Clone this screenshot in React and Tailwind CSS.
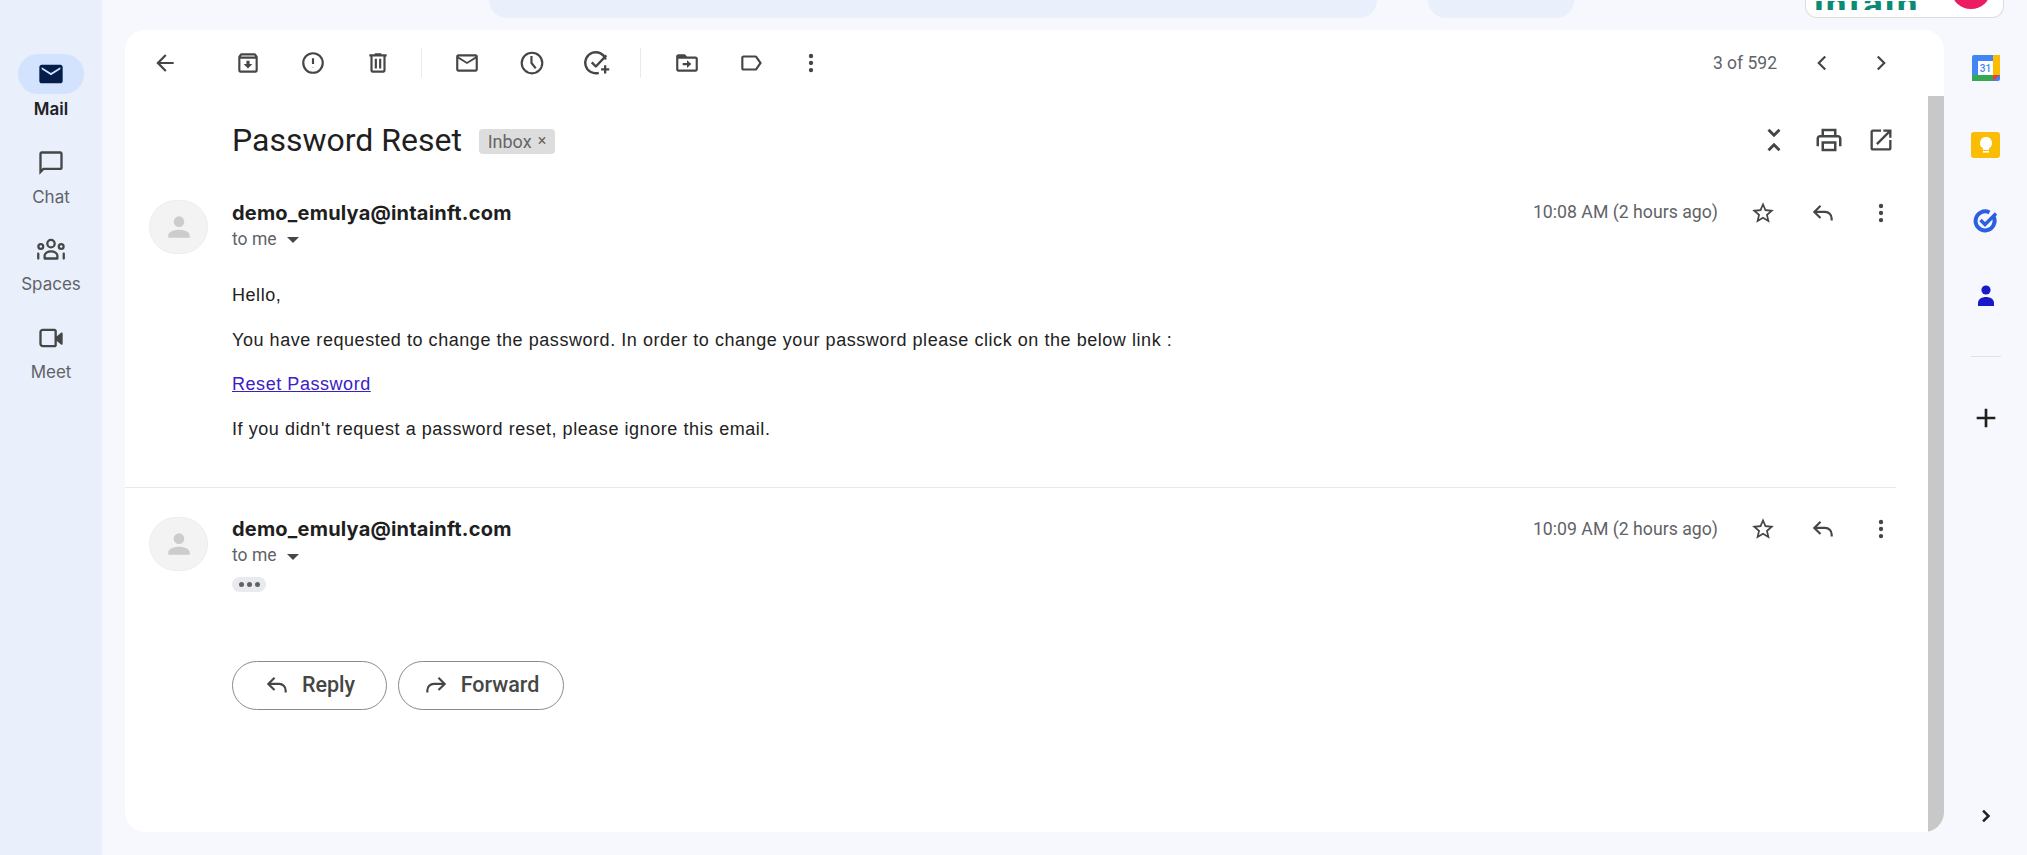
import React from "react";

const ui = "font-['Roboto',sans-serif]";

// Material-style glyph wrapper, filled by default
function Icon({ d, size = 26, className = "text-[#444746]", children }) {
  return (
    <svg width={size} height={size} viewBox="0 0 24 24" fill="currentColor" className={className}>
      {d && <path d={d} />}
      {children}
    </svg>
  );
}

const paths = {
  back: "M20 11H7.83l5.59-5.59L12 4l-8 8 8 8 1.41-1.41L7.83 13H20v-2z",
  archive:
    "M20.54 5.23l-1.39-1.68C18.88 3.21 18.47 3 18 3H6c-.47 0-.88.21-1.16.55L3.46 5.23C3.17 5.57 3 6.02 3 6.5V19c0 1.1.9 2 2 2h14c1.1 0 2-.9 2-2V6.5c0-.48-.17-.93-.46-1.27zM6.24 5h11.52l.81.97H5.44l.8-.97zM5 19V8h14v11H5zm8.45-9h-2.9v3H8l4 4 4-4h-2.55z",
  trash:
    "M15 4V3H9v1H4v2h1v13c0 1.1.9 2 2 2h10c1.1 0 2-.9 2-2V6h1V4h-5zm2 15H7V6h10v13zM9 8h2v9H9zm4 0h2v9h-2z",
  mail: "M22 6c0-1.1-.9-2-2-2H4c-1.1 0-2 .9-2 2v12c0 1.1.9 2 2 2h16c1.1 0 2-.9 2-2V6zm-2 0l-8 5-8-5h16zm0 12H4V8l8 5 8-5v10z",
  move: "M20 6h-8l-2-2H4c-1.11 0-2 .89-2 2v12c0 1.1.9 2 2 2h16c1.1 0 2-.9 2-2V8c0-1.1-.9-2-2-2zm0 12H4V8h16v10zM12 16.5l4-3.5-4-3.5V12H8v2h4z",
  label:
    "M17.63 5.84C17.27 5.33 16.67 5 16 5L5 5.01C3.9 5.01 3 5.9 3 7v10c0 1.1.9 1.99 2 1.99L16 19c.67 0 1.27-.33 1.63-.84L22 12l-4.37-6.16zM16 17H5V7h11l3.55 5L16 17z",
  unfold:
    "M7.41 18.59L8.83 20 12 16.83 15.17 20l1.41-1.41L12 14l-4.59 4.59zm9.18-13.18L15.17 4 12 7.17 8.83 4 7.41 5.41 12 10l4.59-4.59z",
  print:
    "M19 8h-1V3H6v5H5c-1.66 0-3 1.34-3 3v6h4v4h12v-4h4v-6c0-1.66-1.34-3-3-3zM8 5h8v3H8V5zm8 14H8v-4h8v4zm2-2v-4H6v4H4v-6c0-.55.45-1 1-1h14c.55 0 1 .45 1 1v6h-2z",
  open: "M19 19H5V5h7V3H5c-1.11 0-2 .9-2 2v14c0 1.1.89 2 2 2h14c1.1 0 2-.9 2-2v-7h-2v7zM14 3v2h3.59l-9.83 9.83 1.41 1.41L19 6.41V10h2V3h-7z",
  star: "M22 9.24l-7.19-.62L12 2 9.19 8.63 2 9.24l5.46 4.73L5.82 21 12 17.27 18.18 21l-1.63-7.03L22 9.24zM12 15.4l-3.76 2.27 1-4.28-3.32-2.88 4.38-.38L12 6.1l1.71 4.04 4.38.38-3.32 2.88 1 4.28L12 15.4z",
  chat: "M20 2H4c-1.1 0-2 .9-2 2v18l4-4h14c1.1 0 2-.9 2-2V4c0-1.1-.9-2-2-2zm0 14H5.17L4 17.17V4h16v12z",
  person: "M12 12a4 4 0 1 0 0-8 4 4 0 0 0 0 8zm0 2c-2.7 0-8 1.3-8 4v2h16v-2c0-2.7-5.3-4-8-4z",
};

function Stroke({ children, size = 26, width = 2, className = "text-[#444746]" }) {
  return (
    <svg
      width={size}
      height={size}
      viewBox="0 0 24 24"
      fill="none"
      stroke="currentColor"
      strokeWidth={width}
      strokeLinecap="round"
      strokeLinejoin="round"
      className={className}
    >
      {children}
    </svg>
  );
}

const MoreVert = ({ size = 26 }) => (
  <Icon size={size}>
    <circle cx="12" cy="5.5" r="2" />
    <circle cx="12" cy="12" r="2" />
    <circle cx="12" cy="18.5" r="2" />
  </Icon>
);

const ReplyIcon = ({ size = 26 }) => (
  <Stroke size={size}>
    <path d="M9 6 4 11l5 5" strokeLinecap="square" strokeLinejoin="miter" />
    <path d="M4 11h10a6 6 0 0 1 6 6v2" strokeLinecap="butt" />
  </Stroke>
);

const ForwardIcon = ({ size = 26 }) => (
  <Stroke size={size}>
    <path d="m15 6 5 5-5 5" strokeLinecap="square" strokeLinejoin="miter" />
    <path d="M20 11H10a6 6 0 0 0-6 6v2" strokeLinecap="butt" />
  </Stroke>
);

function Tool({ children }) {
  return <div className="flex w-[65px] shrink-0 justify-center">{children}</div>;
}

function RailItem({ icon, label, active }) {
  return (
    <div className="flex w-full flex-col items-center">
      <div className={`flex h-[40px] w-[66px] items-center justify-center rounded-full ${active ? "bg-[#d3e3fd]" : ""}`}>
        {icon}
      </div>
      <span
        className={`font-['Inter',sans-serif] text-[17px] leading-[22px] ${
          active ? "mt-[4px] font-semibold text-[#202124]" : "mt-[3px] text-[#5f6368]"
        }`}
      >
        {label}
      </span>
    </div>
  );
}

function LeftRail() {
  return (
    <aside className="flex w-[102px] shrink-0 flex-col gap-[22.5px] bg-[#e9effb] pt-[54px]">
      <RailItem
        active
        label="Mail"
        icon={
          <Icon size={28} className="text-[#041e49]">
            <path d="M20 4H4c-1.1 0-2 .9-2 2v12c0 1.1.9 2 2 2h16c1.1 0 2-.9 2-2V6c0-1.1-.9-2-2-2zm0 4-8 5-8-5V6.2l8 5 8-5V8z" />
          </Icon>
        }
      />
      <RailItem label="Chat" icon={<Icon size={28} d={paths.chat} />} />
      <RailItem
        label="Spaces"
        icon={
          <Stroke size={34} width={1.6}>
            <circle cx="12" cy="7.5" r="2.6" />
            <circle cx="4.8" cy="9.5" r="1.7" />
            <circle cx="19.2" cy="9.5" r="1.7" />
            <path d="M7.5 18v-2.2c0-1.5 2-2.8 4.5-2.8s4.5 1.3 4.5 2.8V18z" />
            <path d="M3 14.5V18M21 14.5V18" />
          </Stroke>
        }
      />
      <RailItem
        label="Meet"
        icon={
          <Icon size={28}>
            <path d="M5 4c-1.7 0-3 1.3-3 3v10c0 1.7 1.3 3 3 3h10c1.1 0 2-.9 2-2v-3.5l3.6 3c.6.5 1.4.1 1.4-.6V8.1c0-.7-.8-1.1-1.4-.6l-3.6 3V6c0-1.1-.9-2-2-2H5zm0 2h10v12H5c-.6 0-1-.4-1-1V7c0-.6.4-1 1-1z" />
          </Icon>
        }
      />
    </aside>
  );
}

function TopBar() {
  return (
    <header className="flex h-[30px] shrink-0 items-start bg-[#f6f8fd]">
      <div className="ml-[387px] h-[18px] w-[888px] rounded-b-[18px] bg-[#e9effb]" />
      <div className="ml-[51px] h-[18px] w-[146px] rounded-b-[18px] bg-[#e9effb]" />
      <div className="ml-[231px] flex h-[18px] w-[199px] items-end justify-between overflow-hidden rounded-b-[12px] border border-t-0 border-[#dadce0] bg-white pb-[8px] pl-[8px] pr-[12px]">
        <span className={`${ui} mb-[-1px] text-[37px] font-bold leading-[8px] tracking-[2px] text-[#0b8a74]`}>
          <span className="block h-[9px] overflow-hidden">intain</span>
        </span>
        <span className="mb-0 mt-[-40px] size-[40px] shrink-0 rounded-full bg-[#ec1c63]" />
      </div>
    </header>
  );
}

function Toolbar() {
  return (
    <div className="flex h-[66px] shrink-0 items-center pl-[7px] pr-[48px]">
      <Tool><Icon d={paths.back} /></Tool>
      <div className="w-[18px]" />
      <Tool><Icon d={paths.archive} /></Tool>
      <Tool>
        <Stroke>
          <circle cx="12" cy="12" r="9" />
          <path d="M12 7.5v5.5M12 16.3v.2" strokeLinecap="butt" />
        </Stroke>
      </Tool>
      <Tool><Icon d={paths.trash} /></Tool>
      <div className="ml-[11px] mr-[12px] h-[30px] w-px bg-[#e8eaed]" />
      <Tool><Icon d={paths.mail} /></Tool>
      <Tool>
        <Stroke>
          <circle cx="12" cy="12" r="9.5" />
          <path d="M11.5 5.5V12l4 5" strokeLinecap="butt" />
        </Stroke>
      </Tool>
      <Tool>
        <Stroke size={28}>
          <path d="M19.5 9a9 9 0 1 0-6 11.4" strokeLinecap="butt" />
          <path d="m7.5 11.5 3.5 3.5L20 5.5" strokeLinecap="butt" />
          <path d="M19 14v7M15.5 17.5h7" strokeLinecap="butt" />
        </Stroke>
      </Tool>
      <div className="ml-[11px] mr-[13px] h-[30px] w-px bg-[#e8eaed]" />
      <Tool><Icon d={paths.move} /></Tool>
      <div className="ml-[-1px]"><Tool><Icon d={paths.label} /></Tool></div>
      <div className="ml-[-5px]"><Tool><MoreVert /></Tool></div>
      <span className={`${ui} ml-auto text-[17.5px] text-[#5f6368]`}>3 of 592</span>
      <div className="ml-[30px] flex w-[30px] justify-center">
        <Stroke><path d="m15 6-6 6 6 6" strokeLinecap="butt" strokeLinejoin="miter" /></Stroke>
      </div>
      <div className="ml-[29px] flex w-[30px] justify-center">
        <Stroke><path d="m9 6 6 6-6 6" strokeLinecap="butt" strokeLinejoin="miter" /></Stroke>
      </div>
    </div>
  );
}

function Avatar() {
  return (
    <div className="flex h-[54px] w-[59px] shrink-0 items-center justify-center rounded-full border border-[#eeeeee] bg-[#f3f3f3]">
      <Icon d={paths.person} size={32} className="text-[#cccccc]" />
    </div>
  );
}

function MessageHead({ time, dots }) {
  return (
    <div className="flex items-start pl-[24px]">
      <Avatar />
      <div className="ml-[24px] flex-1">
        <div className="flex h-[25px] items-center">
          <span className="font-['Inter',sans-serif] text-[20px] font-bold tracking-[0.2px] text-[#1f1f1f]">demo_emulya@intainft.com</span>
          <span className={`${ui} ml-auto text-[17.7px] text-[#5f6368]`}>{time}</span>
          <div className="ml-[30px] flex w-[30px] justify-center"><Icon d={paths.star} /></div>
          <div className="ml-[30px] flex w-[30px] justify-center"><ReplyIcon /></div>
          <div className="ml-[28px] flex w-[30px] justify-center"><MoreVert /></div>
        </div>
        <div className={`${ui} flex h-[28px] items-center text-[17.5px] text-[#5f6368]`}>
          to me
          <span className="ml-[10px] mt-[2px] size-0 border-x-[6px] border-t-[6px] border-x-transparent border-t-[#444746]" />
        </div>
        {dots && (
          <div className="mt-[7px] flex h-[15px] w-[34px] items-center justify-center gap-[3px] rounded-full bg-[#e8eaed]">
            <span className="size-[5px] rounded-full bg-[#5f6368]" />
            <span className="size-[5px] rounded-full bg-[#5f6368]" />
            <span className="size-[5px] rounded-full bg-[#5f6368]" />
          </div>
        )}
      </div>
    </div>
  );
}

function Pill({ icon, label, width }) {
  return (
    <button className={`flex h-[49px] items-center justify-center gap-[12px] rounded-full border border-[#8a8a8a] bg-white ${width}`}>
      {icon}
      <span className={`${ui} text-[21.5px] font-medium text-[#444746]`}>{label}</span>
    </button>
  );
}

function Thread() {
  return (
    <div className="flex min-w-0 flex-1 flex-col pr-[32px]">
      {/* subject */}
      <div className="flex h-[88px] shrink-0 items-center pl-[107px]">
        <h1 className={`${ui} text-[32px] font-normal text-[#1f1f1f]`}>Password Reset</h1>
        <span className={`${ui} ml-[17px] mt-[2px] flex h-[25px] w-[76px] items-center justify-center gap-[6px] rounded-[4px] bg-[#dddddd] text-[18px] text-[#666666]`}>
          Inbox <span className="text-[16px]">×</span>
        </span>
        <div className="ml-auto flex items-center gap-[23px] pr-[1px]">
          <Icon d={paths.unfold} size={34} />
          <Icon d={paths.print} size={30} />
          <Icon d={paths.open} size={28} />
        </div>
      </div>

      <div className="mt-[16px]">
        <MessageHead time="10:08 AM (2 hours ago)" />
      </div>
      <div className="mt-[30px] flex flex-col gap-[22.5px] pl-[107px] font-['Liberation_Sans',sans-serif] text-[18px] leading-[22px] tracking-[0.55px] text-[#222222]">
        <p>Hello,</p>
        <p>You have requested to change the password. In order to change your password please click on the below link :</p>
        <p><a className="text-[#3a20c9] underline">Reset Password</a></p>
        <p>If you didn't request a password reset, please ignore this email.</p>
      </div>

      <div className="mt-[47px] h-px shrink-0 bg-[#e8eaed]" />

      <div className="mt-[29px]">
        <MessageHead time="10:09 AM (2 hours ago)" dots />
      </div>

      <div className="mt-[69px] flex gap-[11px] pl-[107px]">
        <Pill width="w-[155px]" label="Reply" icon={<ReplyIcon />} />
        <Pill width="w-[166px]" label="Forward" icon={<ForwardIcon />} />
      </div>
    </div>
  );
}

function RightRail() {
  return (
    <aside className="flex w-[83px] shrink-0 flex-col items-center pt-[25px] pb-[6px]">
      {/* calendar */}
      <svg width="28" height="26" viewBox="0 0 28 26">
        <rect width="28" height="26" rx="2" fill="#4285f4" />
        <rect x="21" y="0" width="7" height="20" fill="#fbbc04" />
        <rect x="0" y="20" width="21" height="6" fill="#34a853" />
        <path d="M21 20h7l-7 6z" fill="#ea4335" />
        <rect x="6" y="6" width="15" height="14" fill="#fff" />
        <text x="13.5" y="17" textAnchor="middle" fontSize="10" fontFamily="Roboto, sans-serif" fontWeight="500" fill="#4285f4">31</text>
      </svg>
      {/* keep */}
      <div className="mt-[51px] flex h-[26px] w-[29px] items-center justify-center rounded-[3px] bg-[#fbbc04]">
        <svg width="16" height="18" viewBox="0 0 16 18">
          <path d="M8 1a6 6 0 0 0-3 11.2V14h6v-1.8A6 6 0 0 0 8 1z" fill="#fff" />
          <rect x="5" y="15" width="6" height="1.6" fill="#fff" />
        </svg>
      </div>
      {/* tasks */}
      <svg className="mt-[49px]" width="28" height="28" viewBox="0 0 28 28" fill="none">
        <path d="M21.5 9.5a9.5 9.5 0 1 1-4-4" stroke="#2b5fe0" strokeWidth="4" />
        <path d="m8.5 13 4.5 4.5L24 6.5" stroke="#2b5fe0" strokeWidth="3.4" />
      </svg>
      {/* contacts */}
      <svg className="mt-[47px]" width="24" height="26" viewBox="0 0 24 26">
        <circle cx="12" cy="8" r="4.6" fill="#1a18c8" />
        <path d="M4 24v-3c0-4 4-6 8-6s8 2 8 6v3z" fill="#1a18c8" />
      </svg>
      <div className="mt-[48px] h-px w-[30px] bg-[#dfe1e5]" />
      <Icon size={32} className="mt-[45px] text-[#1f1f1f]">
        <path d="M11 5h2v6h6v2h-6v6h-2v-6H5v-2h6z" />
      </Icon>
      <div className="mt-auto">
        <Stroke size={20} width={3} className="text-[#1f1f1f]">
          <path d="m8.5 5.5 6.5 6.5-6.5 6.5" strokeLinecap="butt" strokeLinejoin="miter" />
        </Stroke>
      </div>
    </aside>
  );
}

export default function App() {
  return (
    <div className="flex h-[855px] w-[2027px] overflow-hidden bg-[#f6f8fd]">
      <LeftRail />
      <div className="flex min-w-0 flex-1 flex-col">
        <TopBar />
        <div className="flex min-h-0 flex-1 pb-[23px] pl-[23px]">
          <main className="flex min-w-0 flex-1 flex-col overflow-hidden rounded-[20px] bg-white">
            <Toolbar />
            <div className="flex min-h-0 flex-1">
              <Thread />
              <div className="w-[16px] shrink-0 bg-[#c8c8c8]" />
            </div>
          </main>
          <RightRail />
        </div>
      </div>
    </div>
  );
}
